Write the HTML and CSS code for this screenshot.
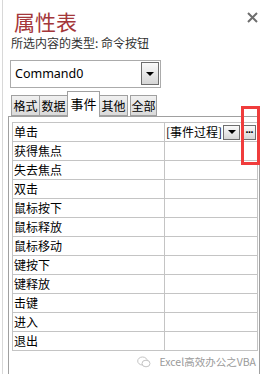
FILE: index.html
```html
<!DOCTYPE html>
<html lang="zh-CN">
<head>
<meta charset="utf-8">
<title>属性表</title>
<link rel="stylesheet" href="styles.css">
</head>
<body>
<div class="sheet">
  <div class="header">
    <div class="title">属性表</div>
    <svg class="close" width="11" height="11" viewBox="0 0 11 11"><path d="M1 1 L10 10 M10 1 L1 10" stroke="#6e6e6e" stroke-width="2" fill="none"/></svg>
  </div>
  <div class="subtitle">所选内容的类型:&nbsp;命令按钮</div>
  <div class="combo">
    <span class="combo-text">Command0</span>
    <span class="combo-btn"><span class="tri"></span></span>
  </div>
  <div class="tabs">
    <div class="tab">格式</div>
    <div class="tab">数据</div>
    <div class="tab active">事件</div>
    <div class="tab">其他</div>
    <div class="tab last">全部</div>
  </div>
  <div class="panel">
    <div class="grid">
      <div class="row">
        <div class="label">单击</div>
        <div class="value">
          <span class="val-text">[事件过程]</span>
          <span class="mini-btn drop"><span class="tri"></span></span>
          <span class="mini-btn dots">···</span>
        </div>
      </div>
      <div class="row"><div class="label">获得焦点</div><div class="value"></div></div>
      <div class="row"><div class="label">失去焦点</div><div class="value"></div></div>
      <div class="row"><div class="label">双击</div><div class="value"></div></div>
      <div class="row"><div class="label">鼠标按下</div><div class="value"></div></div>
      <div class="row"><div class="label">鼠标释放</div><div class="value"></div></div>
      <div class="row"><div class="label">鼠标移动</div><div class="value"></div></div>
      <div class="row"><div class="label">键按下</div><div class="value"></div></div>
      <div class="row"><div class="label">键释放</div><div class="value"></div></div>
      <div class="row"><div class="label">击键</div><div class="value"></div></div>
      <div class="row"><div class="label">进入</div><div class="value"></div></div>
      <div class="row"><div class="label">退出</div><div class="value"></div></div>
    </div>
    <div class="watermark">
      <svg class="wm-icon" width="14" height="12" viewBox="0 0 14 12">
        <ellipse cx="5.5" cy="5" rx="4.8" ry="4" fill="none" stroke="#c4c4c4" stroke-width="1"/>
        <ellipse cx="9" cy="7.5" rx="4" ry="3.3" fill="#fff" stroke="#c4c4c4" stroke-width="1"/>
      </svg>
      <span class="wm-text">Excel高效办公之VBA</span>
    </div>
  </div>
</div>
<div class="highlight"></div>
</body>
</html>
```
FILE: styles.css
```css
html, body {
  margin: 0;
  padding: 0;
  background: #ffffff;
}
body {
  position: relative;
  width: 262px;
  height: 374px;
  overflow: hidden;
  font-family: "Noto Sans CJK SC", "Noto Sans", sans-serif;
  color: #000;
}
.sheet {
  margin-left: 2px;
  border-left: 1px solid #d8d8d8;
  height: 374px;
  box-sizing: border-box;
}
.header {
  display: flex;
  justify-content: space-between;
  align-items: flex-start;
  padding-top: 7px;
  height: 35px;
  box-sizing: border-box;
}
.title {
  font-size: 21px;
  line-height: 28px;
  color: #a4373a;
  padding-left: 11px;
}
.close {
  margin-top: 5px;
  margin-right: 4px;
}
.subtitle {
  font-size: 12px;
  line-height: 16px;
  color: #333;
  padding-left: 8px;
}
.combo {
  margin-top: 9px;
  margin-left: 7px;
  width: 151px;
  height: 28px;
  box-sizing: border-box;
  border: 1px solid #ababab;
  display: flex;
  align-items: center;
  justify-content: space-between;
  padding: 1px 1px 2px 4px;
}
.combo-text {
  font-family: "Noto Sans", sans-serif;
  font-size: 12.5px;
  line-height: 16px;
}
.combo-btn {
  width: 18px;
  height: 23px;
  box-sizing: border-box;
  border: 1px solid #6e6e6e;
  background: linear-gradient(#fafafa, #d6d6d6);
  display: flex;
  align-items: center;
  justify-content: center;
  align-self: flex-start;
}
.tri {
  width: 0;
  height: 0;
  border-left: 4px solid transparent;
  border-right: 4px solid transparent;
  border-top: 4px solid #000;
}
.tabs {
  display: flex;
  align-items: flex-end;
  margin-top: 3px;
  margin-left: 8px;
  height: 25px;
}
.tab {
  font-size: 12px;
  line-height: 19px;
  height: 21px;
  box-sizing: border-box;
  border: 1px solid #a0a0a0;
  background: linear-gradient(#f0f0f0, #dadada);
  padding: 0;
  width: 29px;
  text-align: center;
  white-space: nowrap;
  margin-right: -1px;
}
.tab.active {
  position: relative;
  z-index: 1;
  height: 26px;
  margin-bottom: -1px;
  border-bottom: none;
  background: #ffffff;
  font-size: 13px;
  line-height: 24px;
  width: 33px;
}
.tab.last {
  margin-left: 3px;
  width: 27px;
}
.panel {
  margin-left: 5px;
  width: 252px;
  box-sizing: border-box;
  border: 1px solid #a0a0a0;
  border-bottom: none;
  height: 258px;
  padding: 5px 1px 0 3px;
}
.grid {
  border: 1px solid #c4c4c4;
  border-bottom: none;
}
.row {
  display: flex;
  height: 19px;
  box-sizing: border-box;
  border-bottom: 1px solid #c4c4c4;
}
.label {
  width: 152px;
  box-sizing: border-box;
  border-right: 1px solid #c4c4c4;
  font-size: 12px;
  line-height: 18px;
  padding-left: 1px;
}
.value {
  flex: 1;
  display: flex;
  align-items: center;
  font-size: 12px;
  line-height: 18px;
}
.val-text {
  padding-left: 1px;
  flex: 1;
}
.mini-btn {
  height: 15px;
  box-sizing: border-box;
  border: 1px solid #6e6e6e;
  background: linear-gradient(#fafafa, #d6d6d6);
  display: flex;
  align-items: center;
  justify-content: center;
}
.mini-btn.drop {
  width: 17px;
}
.mini-btn.dots {
  width: 14px;
  margin-left: 2px;
  margin-right: 1px;
  font-family: "DejaVu Sans", sans-serif;
  font-size: 9px;
  font-weight: bold;
  line-height: 13px;
  letter-spacing: -1px;
}
.watermark {
  display: flex;
  align-items: center;
  justify-content: flex-end;
  margin-top: 4px;
  padding-right: 2px;
  gap: 8px;
}
.wm-text {
  font-size: 10.5px;
  line-height: 14px;
  color: #9a9a9a;
}
.highlight {
  position: absolute;
  left: 241px;
  top: 106px;
  width: 19px;
  height: 59px;
  box-sizing: border-box;
  border: 3px solid #f03c3c;
}
```
